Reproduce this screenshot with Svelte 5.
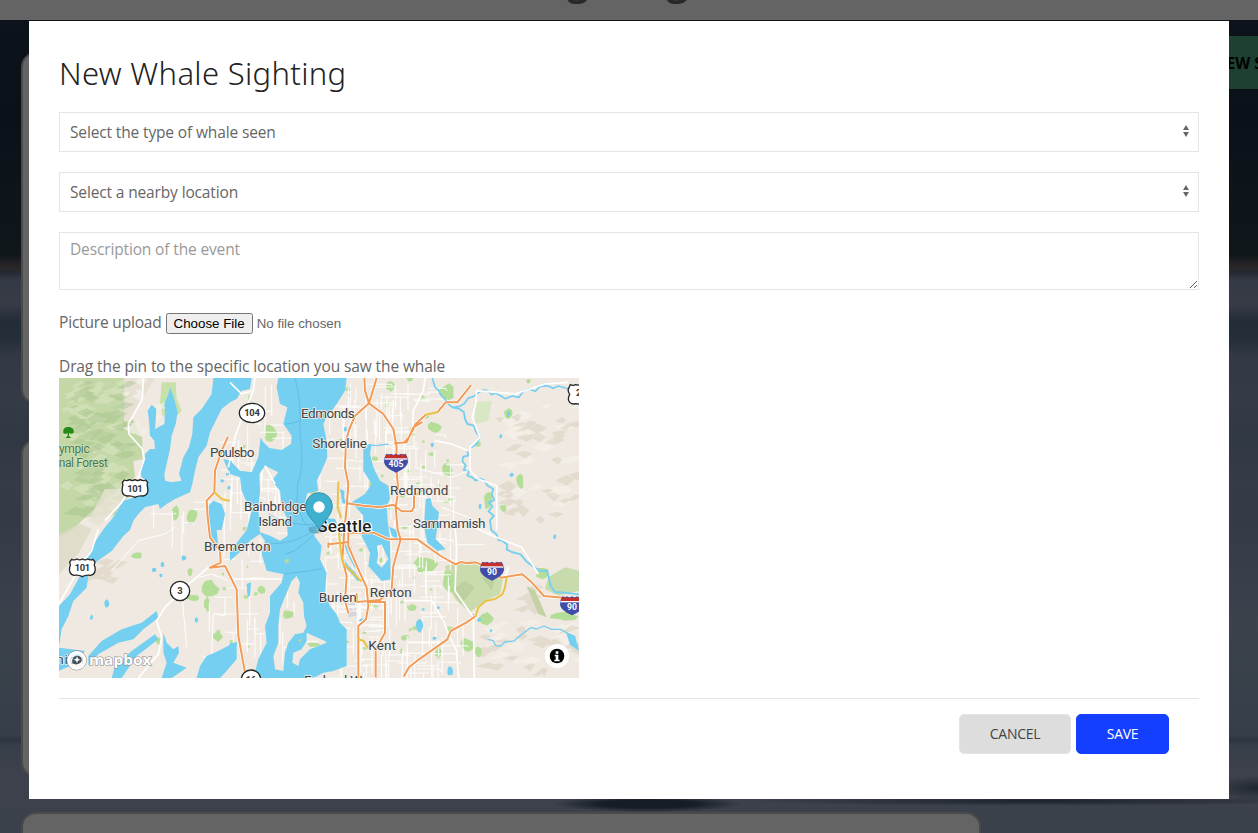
<script>
  let whale = $state('');
  let place = $state('');
  const cards = [352, 338, 338];

  let seed = 41;
  const rnd = () => ((seed = (seed * 16807) % 2147483647) / 2147483647);

  // Street mesh: [x, y, width, height, number of streets]
  const zones = [
    [790, 20, 230, 440, 70], [790, 460, 230, 440, 90], [925, 20, 230, 900, 90],
    [480, 190, 150, 370, 40], [560, 20, 150, 180, 18], [440, 560, 180, 330, 18],
    [1040, 250, 170, 330, 34], [1040, 600, 190, 300, 26], [620, 300, 100, 180, 14],
    [280, 380, 180, 100, 8], [660, 650, 90, 200, 8]
  ];
  let streets = '';
  for (const [x, y, w, h, n] of zones)
    for (let i = 0; i < n; i++) {
      const a = Math.round(x + rnd() * w), b = Math.round(y + rnd() * h), l = Math.round(35 + rnd() * 90);
      streets += rnd() > 0.45 ? `M${a} ${b}v${l}` : `M${a} ${b}h${Math.round(l * 0.7)}l4 ${Math.round(rnd() * 14 - 5)}`;
    }

  // Irregular blob outline around a centre
  const blob = (x, y, w, h) => {
    let d = '';
    for (let i = 0; i < 9; i++) {
      const t = (i / 9) * Math.PI * 2, r = 0.65 + rnd() * 0.45;
      d += `${i ? 'L' : 'M'}${Math.round(x + Math.cos(t) * w * r)} ${Math.round(y + Math.sin(t) * h * r)}`;
    }
    return d + 'Z';
  };
  const scatter = (x, y, w, h, n, s) => {
    let d = '';
    for (let i = 0; i < n; i++) d += blob(x + rnd() * w, y + rnd() * h, s * (0.6 + rnd()), s * (0.5 + rnd() * 0.8));
    return d;
  };
  const parks = [
    [645, 178, 22, 26], [1006, 38, 14, 16], [1178, 55, 24, 26], [1138, 160, 22, 20], [1359, 120, 14, 18],
    [1178, 288, 17, 22], [1300, 378, 18, 30], [1345, 402, 12, 12], [412, 428, 18, 22], [363, 418, 13, 24],
    [246, 545, 18, 12], [406, 596, 9, 14], [415, 672, 20, 10], [465, 645, 28, 26], [456, 690, 10, 26],
    [487, 788, 16, 18], [310, 800, 10, 13], [620, 648, 14, 14], [700, 722, 22, 15], [776, 358, 14, 8],
    [952, 332, 12, 14], [925, 392, 14, 12], [1108, 575, 40, 28], [1180, 622, 22, 36], [1292, 734, 30, 22],
    [1462, 600, 22, 20], [1525, 728, 40, 14], [583, 75, 5, 14], [880, 45, 10, 7], [960, 255, 10, 10],
    [685, 562, 10, 10], [775, 812, 20, 7], [1240, 815, 24, 24], [1150, 835, 12, 20], [1070, 700, 14, 12],
    [980, 560, 8, 10], [1050, 790, 12, 10], [960, 700, 10, 8], [1270, 835, 10, 18], [875, 128, 12, 8],
    [1395, 322, 12, 26], [1268, 210, 12, 9], [1066, 15, 12, 8], [1420, 22, 8, 8]
  ].map((p) => blob(...p)).join('');
  const smallParks = scatter(800, 60, 400, 820, 56, 7) + scatter(480, 200, 130, 660, 16, 6);
  const ponds = blob(1338, 187, 6, 8) + blob(1370, 303, 7, 8) + blob(1360, 120, 5, 9) + blob(1132, 213, 6, 8) + blob(1275, 397, 5, 9) +
    blob(155, 690, 7, 14) + blob(110, 730, 5, 9) + blob(298, 587, 7, 7) + blob(322, 572, 7, 11) + blob(318, 604, 6, 6) + blob(386, 552, 8, 9) +
    blob(425, 738, 6, 10) + blob(1500, 488, 5, 8) + blob(1308, 770, 5, 5) + blob(1186, 890, 9, 18) + blob(1093, 756, 13, 22) +
    scatter(1060, 690, 230, 190, 6, 5) + scatter(500, 280, 40, 120, 3, 6);
  const ridges = (x, y, w, h, n, s) => {
    let d = '';
    for (let i = 0; i < n; i++) {
      const a = Math.round(x + rnd() * w), b = Math.round(y + rnd() * h), l = Math.round(s * (0.6 + rnd()));
      d += `M${a} ${b}l${l} ${-Math.round(l * (0.2 + rnd() * 0.5))}l${Math.round(l * 0.7)} ${Math.round(rnd() * 16)}l${-Math.round(l * 0.7)} ${Math.round(8 + rnd() * 14)}z`;
    }
    return d;
  };
  const forestDark = ridges(12, 25, 170, 400, 74, 28);
  const forestLight = ridges(12, 25, 170, 400, 60, 30);
  const hills = ridges(1320, 120, 230, 320, 34, 24) + ridges(1250, 780, 310, 130, 22, 26) + ridges(60, 560, 110, 70, 8, 24) + ridges(1370, 640, 60, 130, 10, 22);
  const hillsLight = ridges(1320, 100, 230, 320, 26, 28) + ridges(1270, 740, 290, 130, 16, 26) + ridges(190, 20, 130, 180, 12, 22);

  const labels = [
    ['Edmonds', 738, 133, 161], ['Shoreline', 772, 221, 164], ['Poulsbo', 465, 249, 133], ['Redmond', 1005, 363, 175],
    ['Sammamish', 1074, 461, 217], ['Bainbridge', 567, 411, 187], ['Island', 610, 455, 101], ['Bremerton', 447, 532, 200],
    ['Burien', 791, 684, 114], ['Renton', 944, 670, 126], ['Kent', 940, 827, 83], ['Federal Way', 747, 933, 214]
  ];
  const interstates = [[1023, 266, '405'], [1311, 590, '90'], [1551, 694, '90']];
</script>

<div class="page">
  <header><h1>Sightings</h1></header>
  <main>
    <div class="cards">
      {#each cards as h}<article style:height="{h}px"></article>{/each}
    </div>
    <div class="new">NEW SIGHTING</div>
  </main>
</div>

<div class="overlay">
  <div class="dialog">
    <h2>New Whale Sighting</h2>
    <div class="select">
      <select bind:value={whale}><option value="">Select the type of whale seen</option></select>
      <svg width="24" height="16" viewBox="0 0 24 16"><path d="M12 1 9 6h6zM12 13 9 8h6z" fill="#666" /></svg>
    </div>
    <div class="select">
      <select bind:value={place}><option value="">Select a nearby location</option></select>
      <svg width="24" height="16" viewBox="0 0 24 16"><path d="M12 1 9 6h6zM12 13 9 8h6z" fill="#666" /></svg>
    </div>
    <textarea placeholder="Description of the event"></textarea>
    <div class="upload"><span>Picture upload</span><input type="file" /></div>
    <p class="hint">Drag the pin to the specific location you saw the whale</p>

    <svg class="map" width="520" height="300" viewBox="12 12 1560 900">
      <rect x="12" y="12" width="1560" height="900" fill="#efe9e1" />
      <path d="M12 12H207V90L262 190 262 255 235 262 240 310 190 345 150 380 100 420 50 470 12 490Z" fill="#c3d8a6" />
      <path d="M207 12H300L262 75 222 150 207 140Z" fill="#e7e0d5" />
      <path d={forestLight} fill="#d8e5c0" opacity=".6" />
      <path d={forestDark} fill="#9fbd84" opacity=".38" />
      <path d="M150 345 190 345 215 365 170 420 130 455 100 440Z" fill="#e6e2d2" opacity=".8" />
      <path d="M320 25H362L365 75 380 110 365 125 350 90 325 130 315 90Z" fill="#c8e1a9" />
      <path d="M12 480 75 450 110 465 70 540 12 600Z" fill="#dcdac4" opacity=".8" />
      <path d={hillsLight} fill="#f5f1ea" opacity=".7" />
      <path d={hills} fill="#c9c2aa" opacity=".34" />
      <path d="M1170 575 1250 560 1300 590 1345 610 1335 660 1290 680 1245 715 1205 680 1180 640Z" fill="#cadcad" />
      <path d="M1190 650 1230 620 1260 640 1220 690ZM1280 610 1320 615 1310 650Z" fill="#bdd1a0" />
      <path d="M1480 610 1530 580 1572 590V650L1510 665 1470 645Z" fill="#c8dbac" />
      <path d="M1415 635 1440 650 1475 730 1450 720Z" fill="#c3d2a2" />
      <path d="M1258 85 1310 80 1300 140 1260 150Z" fill="#d8e8c4" />
      <path d={parks} fill="#b4dd98" />
      <path d={smallParks} fill="#b9df9f" />
      <path d="M878 690 900 685 905 725 880 730Z" fill="#d5d5df" />
      <path d={streets} fill="none" stroke="#fff" stroke-width="3.2" opacity=".9" />

      <g fill="#75cff0">
        <path d="M290 92 304 105 302 140 300 165 328 150 330 115 328 90 340 60 345 40 355 65 368 115 362 150 350 185 345 225 335 270 328 300 330 320 350 325 380 320 372 300 385 250 402 220 412 180 415 130 440 105 470 60 475 12H590L585 45 560 50 545 75 525 85 500 105 480 145 465 175 455 215 430 250 420 290 412 330 405 355 360 375 335 390 315 405 310 390 270 400 250 420 235 440 225 468 205 486 170 531 120 566 100 606 95 641 55 681 40 726 20 766 12 816V696L45 661 75 606 95 556 115 511 148 462 175 430 205 380 240 370 265 350 280 325 260 310 255 290 270 240 285 225 300 225 298 200 285 185 283 150 278 110Z" />
        <path fill-rule="evenodd" d="M670 12 665 40 675 90 697 100 685 150 710 185 708 210 680 228 643 222 625 205 617 190 610 250 590 295 555 290 525 260V300L555 310 560 350 580 395 590 410 575 468 550 500 525 535V560L560 530 585 500 615 480 630 500 620 540 635 590 685 601 680 626 645 666V716L630 756 635 806 610 856 595 912H775L805 896 835 891 875 876V766L855 746 845 721 825 696 810 656 815 596 795 556 800 516 775 481 850 455 840 435 800 430 750 385 757 358 790 350 785 320 800 290 817 250 815 200 805 150 815 130 845 90 870 50 875 12ZM630 275 670 295 650 320 675 350 680 400 695 430 698 485 675 500 645 485 615 475 610 400 615 350 613 300ZM725 606 735 626 730 656 745 686 747 726 755 756 745 776 720 781 700 806 690 836 685 891 660 886 655 846 670 806V756L675 706 695 656 710 621ZM755 776 810 801 815 806 765 826 735 856 730 876 712 866 715 836 740 826 755 801Z" />
        <path fill-rule="evenodd" d="M925 215 950 210 945 240 955 280 975 320 1000 335 1005 375 995 395 998 440 1005 496 1007 616 980 621 940 576 945 536 920 486 925 425 890 385 930 360 950 330 925 290ZM980 511 1000 556 980 581 965 566 970 541 965 516Z" />
        <path d="M855 345 868 350 868 375 885 385 885 392 862 388ZM866 555 880 575 900 595 915 618 908 622 890 600 870 580ZM915 735 925 732 920 742 910 742ZM868 160 875 158 875 172 866 172Z" />
        <path d="M305 711 310 731 265 766 235 796 190 806 130 841 100 876 100 846 140 801 200 766 260 746ZM12 821 90 831 60 870 12 890ZM170 912 180 876 230 831 300 781 310 796 245 846 200 912ZM325 776 335 806 355 826 370 816 372 836 355 866 395 881 350 912H320L335 866 325 836ZM425 912 435 876 455 846 490 831 545 802 545 856 510 896 495 912Z" />
        <path d="M1112 375 1127 372 1132 395 1152 415 1142 495 1172 526 1147 531 1117 506 1107 456ZM460 395 475 380 500 390 510 420 500 468H485L490 520 470 520 458 440ZM505 255 530 260 540 300 520 290ZM575 630 588 625 585 665 578 670ZM1533 775 1560 785 1572 830 1545 812ZM525 806 545 810 540 840 520 845ZM1003 458 1030 470 1025 495 1010 485Z" />
        <path d={ponds} />
      </g>
      <path d="M688 560 700 552 702 564 692 570ZM728 798 740 795 738 805Z" fill="#b9d89c" />
      <g fill="none" stroke="#75cff0" stroke-width="5" stroke-linejoin="round">
        <path d="M1132 12 1140 40 1150 48 1157 62 1170 75 1180 90 1192 100 1210 98 1227 90 1240 72 1255 68 1272 55 1285 48 1297 50 1310 62 1322 58 1337 65 1350 74 1372 66 1392 70 1405 52 1422 45 1440 52 1455 38 1477 35 1495 43 1510 36 1542 45" />
        <path d="M1192 100 1212 104 1227 115 1230 135 1237 150 1257 155 1262 172 1275 190 1262 212 1248 220M1237 230 1240 245 1225 248 1222 260 1232 275 1226 288 1242 292 1237 305 1252 310 1262 320 1275 314 1287 318 1298 335 1315 345 1310 360 1318 378 1302 385 1312 398 1300 412 1316 425 1305 440 1309 468 1325 482 1330 498 1342 500 1357 512 1355 526 1370 534 1397 541 1412 560 1432 576 1455 590 1477 591 1487 636 1500 654 1527 656 1572 661" stroke-width="5.5" />
        <path d="M1297 796 1315 800 1322 815 1337 816 1350 804 1377 801 1395 785 1427 761 1445 765 1467 756 1490 766 1517 766 1560 790M930 212 965 215 1000 210M860 480 880 540 900 580" stroke-width="4" />
      </g>
      <g fill="none" stroke="#4f9fd5" stroke-width="2" opacity=".65">
        <path d="M720 12Q740 80 735 180 750 270 728 330 715 420 770 470M690 150Q710 150 735 140M640 420Q700 455 775 452M690 600 800 585M775 470Q720 510 640 510M780 480 720 530 690 540" />
      </g>

      <g fill="none" stroke="#fff" stroke-width="5" stroke-linejoin="round">
        <path d="M265 12 262 75 220 150 222 180 262 225 268 255 250 310 200 385 150 440M130 465 110 530 80 570 12 690M525 25 560 60 590 50M630 275 660 330M600 12 595 50 565 120 540 190 520 280" />
        <path d="M1265 50 1262 90 1252 130 1275 190 1245 220 1245 290 1270 315 1325 335 1325 468M1265 50 1380 60 1470 30 1540 25M1110 12 1105 50 1075 110 1072 170 1047 220M1250 456 1300 480 1400 520 1450 600M1140 200 1190 210 1240 230M1200 456 1205 520 1200 650 1255 730 1258 912M1047 680 1130 680 1165 740 1180 780 1205 830 1210 912M1060 805H1160" />
        <path d="M460 580 390 640 330 700 305 740 320 790 310 840 250 912M535 615H680M1360 580 1350 610" />
      </g>
      <g fill="none" stroke="#fff" stroke-width="3"><path d="M170 590 250 500 330 480 360 460M560 810H600M480 720H610M380 650 395 820M1160 400 1240 430 1310 480M1080 280 1190 310 1240 290M430 610 470 600 520 620M470 840 475 720 510 725 510 670" /></g>

      <g fill="none" stroke-linejoin="round" stroke-linecap="round">
        {#each [['#fff', 10], ['#f29b58', 6]] as [c, w]}
          <path stroke={c} stroke-width={w} d="M518 190 500 230 480 290 478 355 455 380 458 430 465 490 495 531 497 566 465 581 510 576 545 646 550 786 573 912M928 12 930 50 942 88 965 12M942 88 900 125 883 165 873 200 870 280 880 330 875 400 868 468 862 556 875 606 870 681 880 716M942 88 985 120 1015 165 1025 220 1023 270 1030 350 1022 400 1028 468 1037 496 1015 576 1010 646 975 678 905 684 905 660M1020 208 1055 205 1075 160 1100 145M875 388 925 395 975 400 1015 392 1040 412H1070L1077 400V365L1112 345M880 456V516L910 586 935 641 940 696 933 736 910 756V912M822 511 880 504M820 520V508M880 476H955L1000 496H1087L1157 546 1202 571 1217 564 1237 568 1262 565 1282 573 1320 600 1337 611 1402 601 1430 625 1467 666 1527 671 1572 690M940 684H990V776L962 826V912M1247 35 1207 85 1172 85 1147 115M1112 122 1082 150 1062 190 1047 205M1047 906 1062 880 1092 856 1177 796 1187 771 1235 745 1262 726" />
        {/each}
        <path stroke="#eac344" stroke-width="6" d="M478 355 500 375 522 380M1147 115 1112 122M1262 726 1270 700 1292 681 1320 675 1342 661 1350 640 1355 611M850 325 848 400 858 430M850 460 860 550 865 570 918 620M910 796 925 800 938 820" />
      </g>

      <g class="town">
        {#each labels as [t, x, y, w]}
          <text {x} {y} textLength={w}>{t}</text>
        {/each}
        <text x="4" y="870" textLength="84">nion</text>
      </g>
      <g class="wood">
        <path d="M40 159c-10 0-16 6-15 13-3 9 10 9 13 5v9l-7 6h18l-7-6v-9c5 5 18 2 14-6 1-7-7-12-16-12z" fill="#268a16" stroke="none" />
        <text x="12" y="236" textLength="92">ympic</text><text x="11" y="279" textLength="148">nal Forest</text>
      </g>

      <g class="shield">
        {#each [[240, 342], [82, 580]] as [x, y]}
          <g transform="translate({x} {y})">
            <path d="M-32-24q8 4 16-1 8 5 16 0 8 5 16 0 8 5 16 1l6 8q-4 8 0 15Q42 20 25 24 10 22 0 28-10 22-25 24-42 20-38-1-34-8-38-16Z" />
            <text y="11" textLength="46">101</text>
          </g>
        {/each}
        <path d="M1546 32q8 4 16 0l15 2v58q-12-4-20-2-16-1-17-15 1-10 4-14-6-8-4-16z" /><text x="1571" y="66">2</text>
        <ellipse cx="591" cy="117" rx="38" ry="29" /><text x="591" y="127" textLength="47">104</text>
        <circle cx="375" cy="651" r="29" /><text x="375" y="661">3</text>
        <circle cx="588" cy="917" r="29" /><text x="588" y="926">16</text>
      </g>
      {#each interstates as [x, y, t]}
        <g transform="translate({x} {y})" class="inter">
          <path d="M-29-27q8 4 14 0 7 6 15 0 8 6 15 0 6 4 14 0 7 10 7 26-3 17-36 31-33-14-36-31 0-16 7-26z" fill="#3f4da8" />
          <path d="M-29-25q8 4 14 0 7 6 15 0 8 6 15 0 6 4 14 0l4 13h-66z" fill="#c6302b" />
          <path d="M-34-11h68" stroke="#fff" stroke-width="4" />
          <text y="14">{t}</text>
        </g>
      {/each}
      <text class="city" x="787" y="473" textLength="162">Seattle</text>

      <ellipse cx="786" cy="467" rx="26" ry="12" fill="#000" opacity=".14" />
      <path d="M792 468C784 445 752 427 752 396a40 40 0 0 1 80 0c0 31-32 49-40 72Z" fill="#3fb1ce" stroke="#3096b2" stroke-width="3" />
      <circle cx="792" cy="399" r="17" fill="#fff" />

      <g>
        <circle cx="65" cy="859" r="29" fill="#fff" fill-opacity=".75" stroke="#777" stroke-width="2" />
        <circle cx="65" cy="859" r="24" fill="none" stroke="#fff" stroke-width="8" />
        <path d="M52 868c-2-13 4-24 16-23 13 1 17 16 6 23-7 5-15 4-22 0Z" fill="#46555b" />
        <path d="m66 847 3 7 7 3-7 3-3 7-3-7-7-3 7-3z" fill="#fff" />
        <text class="brand" x="102" y="873" textLength="187" lengthAdjust="spacingAndGlyphs">mapbox</text>
      </g>
      <circle cx="1506" cy="846" r="36" fill="#fff" />
      <circle cx="1506" cy="846" r="22" fill="#000" />
      <path d="M1502 832h8v7h-8zM1499 842h11v15h4v5h-16v-5h4v-10h-3z" fill="#fff" />
    </svg>

    <footer>
      <button class="cancel">CANCEL</button>
      <button class="save">SAVE</button>
    </footer>
  </div>
</div>

<style>
  :global(body) { overflow: hidden; }
  .page {
    height: 833px; overflow: hidden; font-family: "Open Sans", sans-serif;
    background:
      radial-gradient(ellipse 94px 8px at 648px 804px, #171d25 0 50%, transparent),
      radial-gradient(ellipse 300px 5px at 1040px 801px, #1d232c, transparent),
      radial-gradient(ellipse 50px 12px at 1258px 788px, #20262e, transparent),
      linear-gradient(#0d131a 0, #0b1119 120px, #10171b 255px, #2b2729 267px, #252a32 273px, #343a45 280px, #373b46 305px, #232d38 320px, #252f3a 340px, #323945 356px, #343b46 400px, #303843 440px, #363c47 480px, #343b46 520px, #3b424c 620px, #363f49 735px, #2c343e 740px, #363f49 745px, #3d414b 770px, #3b414b);
  }
  header { height: 20px; background: #646464; display: flex; align-items: flex-end; justify-content: center; overflow: hidden; padding-right: 16px; }
  h1 { margin: 0 0 20px; font-size: 38px; line-height: 39px; color: #292929; }
  main { display: flex; }
  .cards { display: flex; flex-direction: column; gap: 35px; padding: 32px 0 0 21px; }
  article { flex: none; box-sizing: border-box; width: 960px; border: 2px solid #4a4a4a; border-radius: 15px; background: #646464; }
  .new { flex: none; box-sizing: border-box; height: 53px; margin: 16px 0 0 205px; padding-left: 28px; width: 170px; background: #1d4030; color: #000; font: bold 15.5px/55px "Open Sans", sans-serif; }
  .overlay { position: fixed; inset: 0; display: flex; justify-content: center; align-items: flex-start; padding-top: 21px; }
  .dialog { box-sizing: border-box; width: 1200px; height: 778px; padding: 30px; background: #fff; color: #666; font: 16px/24px "Noto Sans", sans-serif; display: flex; flex-direction: column; }
  h2 { margin: 1px 0 18px; font-size: 31px; line-height: 42px; font-weight: 300; color: #222; letter-spacing: .34px; white-space: nowrap; align-self: flex-start; }
  .select { display: grid; margin-bottom: 20px; }
  .select > * { grid-area: 1 / 1; }
  .select svg { justify-self: end; align-self: start; margin: 12px 1px 0 0; }
  select, textarea { box-sizing: border-box; width: 100%; border: 1px solid #e5e5e5; border-radius: 0; background: #fff; color: #666; font: 15.5px/24px "Open Sans", sans-serif; letter-spacing: -.14px; margin: 0; outline: 0; }
  select { appearance: none; height: 40px; padding: 0 10px; }
  textarea { display: block; height: 58px; padding: 4px 10px; flex: none; }
  textarea::placeholder { color: #999; }
  .upload { display: flex; align-items: center; height: 24px; margin-top: 21px; gap: 4px; font: 15.5px/22px "Open Sans", sans-serif; letter-spacing: -.18px; }
  .upload span { margin-bottom: 2px; }
  .upload input { font: 13.333px "Liberation Sans", Arial, sans-serif; letter-spacing: 0; color: #666; }
  .hint { margin: 19px 0 1px; height: 23px; font: 15.5px/24px "Open Sans", sans-serif; letter-spacing: -.11px; white-space: nowrap; align-self: flex-start; }
  .map { display: block; flex: none; font-family: Roboto, sans-serif; }
  .town text { font-size: 40.5px; fill: #3e4246; stroke: #f5f1eb; stroke-width: 5px; paint-order: stroke; stroke-linejoin: round; }
  .wood text { font-size: 36px; fill: #49794a; stroke: #d4e3c1; stroke-width: 3px; paint-order: stroke; }
  .shield path, .shield circle, .shield ellipse { fill: #fff; stroke: #252525; stroke-width: 4px; }
  .shield text { font-size: 28px; font-weight: 700; text-anchor: middle; fill: #333; }
  .inter text { font-size: 26px; font-weight: 700; text-anchor: middle; fill: #fff; }
  .city { font-size: 51px; font-weight: 500; fill: #1d1f21; stroke: #fff; stroke-width: 6px; paint-order: stroke; }
  .brand { font: 700 44px "Open Sans", sans-serif; fill: #fff; stroke: #858585; stroke-width: 3px; paint-order: stroke; }
  footer { margin-top: 20px; border-top: 1px solid #e5e5e5; padding: 15px 30px 0 0; display: flex; justify-content: flex-end; gap: 5px; }
  button { box-sizing: border-box; height: 40px; border: 1px solid #e5e5e5; border-radius: 5px; padding: 0; font: 14px/38px "Open Sans", sans-serif; letter-spacing: -.3px; }
  .cancel { width: 112px; background: #ddd; color: #444; }
  .save { width: 93px; background: #143fff; border-color: #143fff; color: #fff; font-weight: 500; }
</style>
